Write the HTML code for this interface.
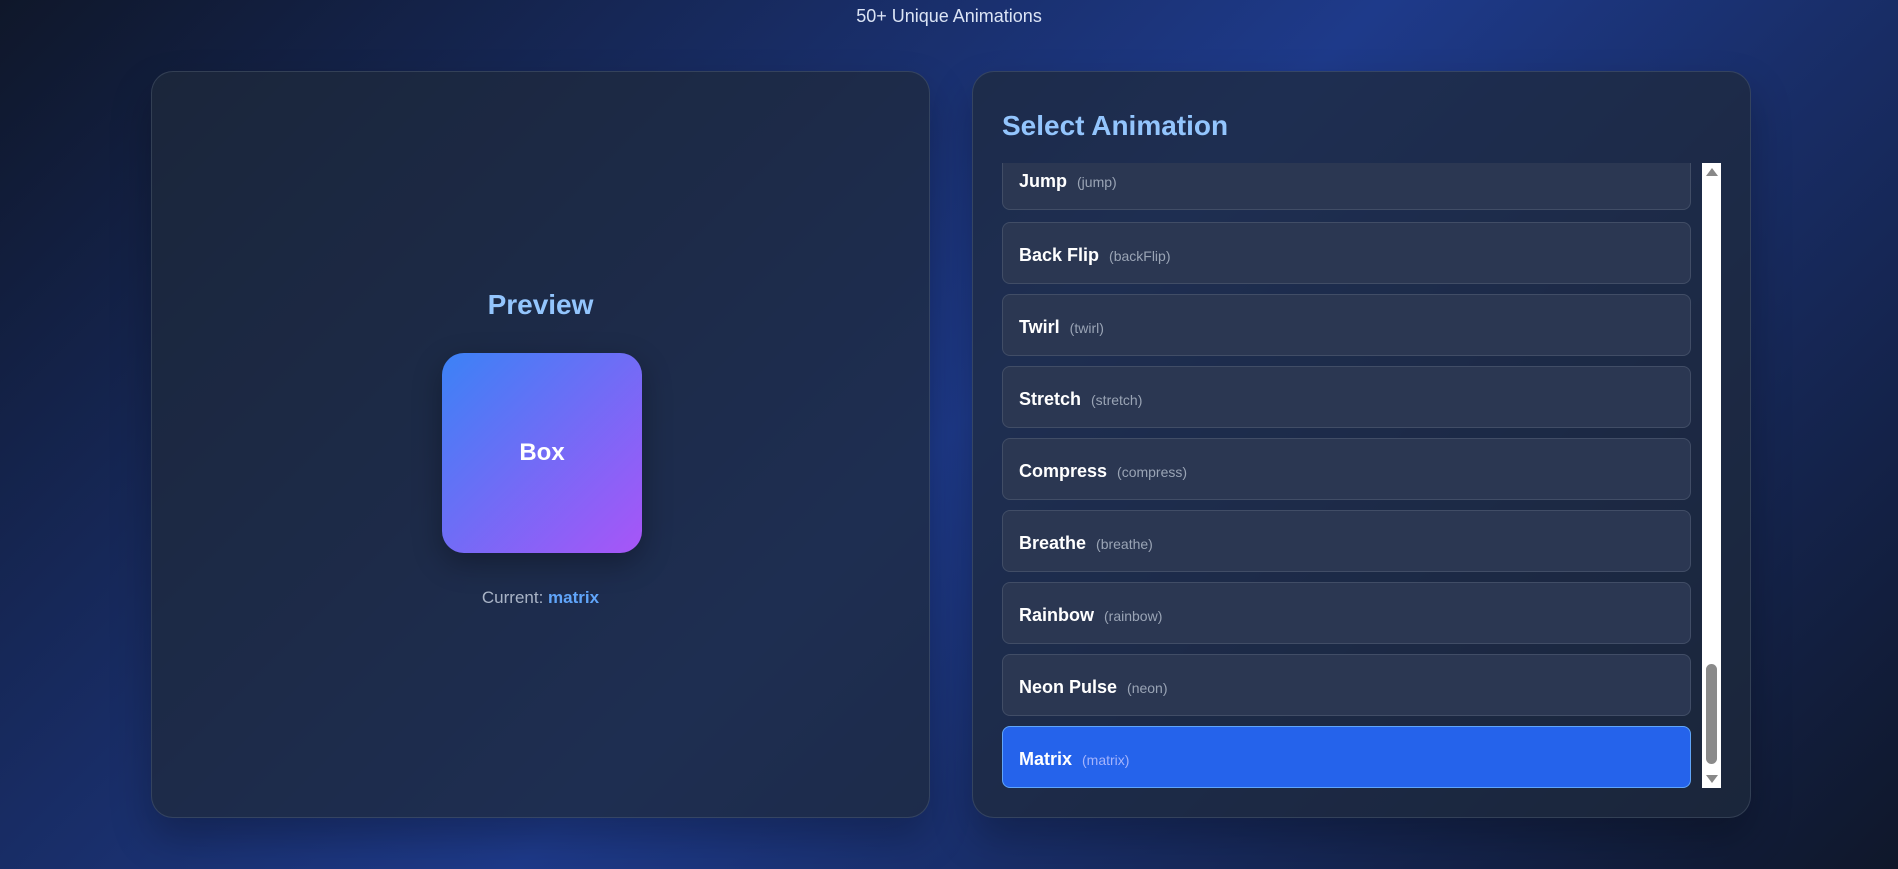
<!DOCTYPE html>
<html><head><meta charset="utf-8"><style>
*{box-sizing:border-box;margin:0;padding:0}
body{width:1898px;height:869px;overflow:hidden;font-family:"Liberation Sans",sans-serif;background:linear-gradient(135deg,#0f172a 0%,#1e3a8a 50%,#0f172a 100%);position:relative;color:#fff}
.t{position:absolute;top:6px;left:0;width:100%;text-align:center;font-size:18px;color:#dbe4f5}
.p{position:absolute;top:71px;height:747px;width:779px;border-radius:22px;background:rgba(30,41,59,0.72);border:1px solid rgba(148,163,184,0.2);box-shadow:0 20px 40px rgba(0,0,0,0.25)}
h2{font-size:28px;color:#93c5fd;font-weight:bold}
.box{position:absolute;left:290px;top:281px;width:200px;height:200px;border-radius:22px;background:linear-gradient(135deg,#3b82f6,#a855f7);display:flex;align-items:center;justify-content:center;font-weight:bold;font-size:24px;box-shadow:0 10px 30px rgba(0,0,0,0.3)}
.list{position:absolute;left:29px;top:91px;width:689px;height:625px;overflow:hidden}
.it{position:absolute;left:0;width:689px;height:62px;border-radius:8px;background:#2b3752;border:1px solid #414d66;padding-left:16px;padding-top:5px;display:flex;align-items:center;font-weight:bold;font-size:18px}
.it span{font-weight:normal;font-size:14px;color:#9aa4b5;margin-left:10px}
.sel{background:#2563eb;border-color:#60a5fa}
.sel span{color:#a5b4fc}
.sb{position:absolute;left:729px;top:91px;width:19px;height:625px;background:#fff}
</style></head><body>
<div class="t">50+ Unique Animations</div>
<div class="p" style="left:151px">
 <h2 style="position:absolute;top:217px;width:100%;text-align:center">Preview</h2>
 <div class="box">Box</div>
 <div style="position:absolute;top:516px;width:100%;text-align:center;font-size:17px;color:#a9b4c6">Current: <b style="color:#60a5fa">matrix</b></div>
</div>
<div class="p" style="left:972px">
 <h2 style="position:absolute;left:29px;top:38px">Select Animation</h2>
 <div class="list">
  <div class="it" style="top:-15px">Jump<span>(jump)</span></div>
  <div class="it" style="top:59px">Back Flip<span>(backFlip)</span></div>
  <div class="it" style="top:131px">Twirl<span>(twirl)</span></div>
  <div class="it" style="top:203px">Stretch<span>(stretch)</span></div>
  <div class="it" style="top:275px">Compress<span>(compress)</span></div>
  <div class="it" style="top:347px">Breathe<span>(breathe)</span></div>
  <div class="it" style="top:419px">Rainbow<span>(rainbow)</span></div>
  <div class="it" style="top:491px">Neon Pulse<span>(neon)</span></div>
  <div class="it sel" style="top:563px">Matrix<span>(matrix)</span></div>
 </div>
 <div class="sb">
  <div style="position:absolute;left:4px;top:5px;width:0;height:0;border-left:6px solid transparent;border-right:6px solid transparent;border-bottom:8px solid #888"></div>
  <div style="position:absolute;left:4px;top:501px;width:11px;height:100px;border-radius:6px;background:#8a8a8a"></div>
  <div style="position:absolute;left:4px;top:612px;width:0;height:0;border-left:6px solid transparent;border-right:6px solid transparent;border-top:8px solid #888"></div>
 </div>
</div>
</body></html>
